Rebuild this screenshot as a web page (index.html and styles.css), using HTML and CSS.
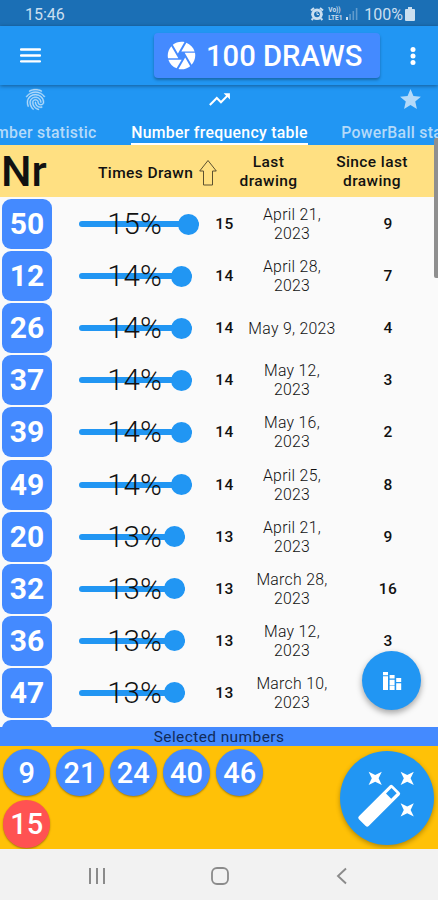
FILE: index.html
```html
<!DOCTYPE html>
<html lang="en">
  <head>
    <meta charset="UTF-8" />
    <meta name="viewport" content="width=device-width, initial-scale=1.0" />
    <title>Number frequency table</title>
    <link rel="stylesheet" href="styles.css">
  </head>
  <body>
    <div class="phone">
      <div class="status-bar">
        <span class="clock">15:46</span>
        <div class="status-icons">
          <svg width="14" height="14" viewBox="0 0 14 14">
            <circle cx="7" cy="7.3" r="5.8" fill="currentColor" />
            <path d="M1 3.5L4 1M13 3.5L10 1M3 11.5L1.6 13M11 11.5L12.4 13" stroke="currentColor" stroke-width="2" />
            <circle cx="7" cy="7.3" r="2.9" fill="#1b6fb5" />
            <path d="M7 5v2.5h2" fill="none" stroke="currentColor" stroke-width="1" />
          </svg>
          <div class="volte"><span>Vo))</span><span>LTE1</span></div>
          <svg class="signal" width="13" height="12" viewBox="0 0 13 12">
            <path d="M1 9h2v3H1z" fill="currentColor" />
            <path d="M4.3 6h1.6v6H4.3zM7.5 3h1.6v9H7.5zM10.8 0h1.6v12h-1.6z" fill="currentColor" opacity=".4" />
          </svg>
          <span class="battery-text">100%</span>
          <svg width="10" height="14" viewBox="0 0 10 14">
            <path d="M3 0h4v2h2q1 0 1 1v10q0 1-1 1H1q-1 0-1-1V3q0-1 1-1h2z" fill="currentColor" />
          </svg>
        </div>
      </div>

      <header class="app-bar">
        <svg class="menu-icon" width="21" height="15" viewBox="0 0 21 15">
          <path d="M1 1.5h19M1 7.5h19M1 13.4h19" stroke="#fff" stroke-width="2.3" stroke-linecap="round" />
        </svg>
        <button class="draws-btn">
          <svg width="33" height="33" viewBox="0 0 24 24" fill="#fff">
            <path d="M9.4 10.5l4.77-8.26C13.47 2.09 12.75 2 12 2c-2.4 0-4.6.85-6.32 2.25l3.66 6.35.06-.1zM21.54 9c-.92-2.92-3.15-5.26-6-6.34L11.88 9h9.66zm.26 1h-7.49l.29.5 4.76 8.25C21 16.97 22 14.61 22 12c0-.69-.07-1.35-.2-2zM8.54 12l-3.9-6.75C3.01 7.03 2 9.39 2 12c0 .69.07 1.35.2 2h7.49l-1.15-2zm-6.08 3c.92 2.92 3.15 5.26 6 6.34L12.12 15H2.46zm11.27 0l-3.9 6.76c.7.15 1.42.24 2.17.24 2.4 0 4.6-.85 6.32-2.25l-3.66-6.35-.93 1.6z" />
          </svg>
          <span>100 DRAWS</span>
        </button>
        <svg class="more-icon" width="6" height="20" viewBox="0 0 6 20" fill="#fff">
          <circle cx="3" cy="3.4" r="2.5" /><circle cx="3" cy="10" r="2.5" /><circle cx="3" cy="16.6" r="2.5" />
        </svg>
      </header>

      <nav class="tabs">
        <div class="tab tab-left">
          <svg width="25" height="25" viewBox="0 0 24 24" fill="currentColor" stroke="currentColor" stroke-width=".4">
            <path d="M17.81 4.47c-.08 0-.16-.02-.23-.06C15.66 3.42 14 3 12.01 3c-1.98 0-3.86.47-5.57 1.41-.24.13-.54.04-.68-.2-.13-.24-.04-.55.2-.68C7.82 2.52 9.86 2 12.01 2c2.13 0 3.99.47 6.03 1.52.25.13.34.43.21.67-.09.18-.26.28-.44.28zM3.5 9.72c-.1 0-.2-.03-.29-.09-.23-.16-.28-.47-.12-.7.99-1.4 2.25-2.5 3.75-3.27C9.98 4.04 14 4.03 17.15 5.65c1.5.77 2.76 1.86 3.75 3.25.16.22.11.54-.12.7-.23.16-.54.11-.7-.12-.9-1.26-2.04-2.25-3.39-2.94-2.87-1.47-6.54-1.47-9.4.01-1.36.7-2.5 1.7-3.4 2.96-.08.14-.23.21-.39.21zm6.25 12.07c-.13 0-.26-.05-.35-.15-.87-.87-1.34-1.43-2.01-2.64-.69-1.23-1.05-2.73-1.05-4.34 0-2.97 2.54-5.39 5.66-5.39s5.66 2.42 5.66 5.39c0 .28-.22.5-.5.5s-.5-.22-.5-.5c0-2.42-2.09-4.39-4.66-4.39-2.57 0-4.66 1.97-4.66 4.39 0 1.44.32 2.77.93 3.85.64 1.15 1.08 1.64 1.85 2.42.19.2.19.51 0 .71-.11.1-.24.15-.37.15zm7.17-1.85c-1.19 0-2.24-.3-3.1-.89-1.49-1.01-2.38-2.65-2.38-4.39 0-.28.22-.5.5-.5s.5.22.5.5c0 1.41.72 2.74 1.94 3.56.71.48 1.54.71 2.54.71.24 0 .64-.03 1.04-.1.27-.05.53.13.58.41.05.27-.13.53-.41.58-.57.11-1.07.12-1.21.12zM14.91 22c-.04 0-.09-.01-.13-.02-1.59-.44-2.63-1.03-3.72-2.1-1.4-1.39-2.17-3.24-2.17-5.22 0-1.62 1.38-2.94 3.08-2.94 1.7 0 3.08 1.32 3.08 2.94 0 1.07.93 1.94 2.08 1.94s2.08-.87 2.08-1.94c0-3.77-3.25-6.83-7.25-6.83-2.84 0-5.44 1.58-6.61 4.03-.39.81-.59 1.76-.59 2.8 0 .78.07 2.01.67 3.61.1.26-.03.55-.29.64-.26.1-.55-.04-.64-.29-.49-1.31-.73-2.61-.73-3.96 0-1.2.23-2.29.68-3.24 1.33-2.79 4.28-4.6 7.51-4.6 4.55 0 8.25 3.51 8.25 7.83 0 1.62-1.38 2.94-3.08 2.94s-3.08-1.32-3.08-2.94c0-1.07-.93-1.94-2.08-1.94s-2.08.87-2.08 1.94c0 1.71.66 3.31 1.87 4.51.95.94 1.86 1.46 3.27 1.85.27.07.42.35.35.61-.05.23-.26.38-.47.38z" />
          </svg>
          <span class="tab-label">Number statistic</span>
        </div>
        <div class="tab tab-center active">
          <svg width="25" height="25" viewBox="0 0 24 24" fill="currentColor">
            <path d="M16 6l2.29 2.29-4.88 4.88-4-4L2 16.59 3.41 18l6-6 4 4 6.3-6.29L22 12V6z" />
          </svg>
          <span class="tab-label">Number frequency table</span>
        </div>
        <div class="tab tab-right">
          <svg width="25" height="25" viewBox="0 0 24 24" fill="currentColor">
            <path d="M12 17.27L18.18 21l-1.64-7.03L22 9.24l-7.19-.61L12 2 9.19 8.63 2 9.24l5.46 4.73L5.82 21z" />
          </svg>
          <span class="tab-label">PowerBall statistic</span>
        </div>
      </nav>

      <div class="table-head">
        <span class="head-nr">Nr</span>
        <div class="head-times">
          <span>Times Drawn</span>
          <svg width="20" height="28" viewBox="0 0 20 28">
            <path d="M10 1.5L18.3 12H14.5V26H5.5V12H1.7z" fill="none" stroke="#5c5130" stroke-width="1" />
          </svg>
        </div>
        <span class="head-text">Last<br>drawing</span>
        <span class="head-text">Since last<br>drawing</span>
      </div>

      <div class="list" id="list">
        <!-- Rows are added by script.js -->
      </div>

      <div class="selected-title">Selected numbers</div>
      <div class="selected">
        <div class="balls">
          <span class="ball">9</span>
          <span class="ball">21</span>
          <span class="ball">24</span>
          <span class="ball">40</span>
          <span class="ball">46</span>
          <span class="ball ball-red">15</span>
        </div>
        <button class="magic-btn">
          <svg width="94" height="94" viewBox="0 0 94 94" fill="#fff">
            <path id="spark" d="M28.6 20.7l6.6 3.2 6.6-3.2-3.2 6.6 3.2 6.6-6.6-3.2-6.6 3.2 3.2-6.6z" />
            <use href="#spark" x="32" />
            <use href="#spark" x="32" y="31.6" />
            <path fill-rule="evenodd" d="M49.7 34.4q1.5-1.5 3 0l6.8 6.8q1.5 1.5 0 3L28.7 75q-1.5 1.5-3 0l-6.8-6.8q-1.5-1.5 0-3zM51.5 37L46 42.5l5.2 5.2 5.5-5.5z" />
          </svg>
        </button>
      </div>

      <div class="nav-bar">
        <svg width="18" height="18" viewBox="0 0 18 18">
          <path d="M2 1v16M9 1v16M16 1v16" stroke="#8b8b8b" stroke-width="2" />
        </svg>
        <svg width="18" height="18" viewBox="0 0 18 18">
          <rect x="1" y="1" width="16" height="16" rx="5" fill="none" stroke="#8b8b8b" stroke-width="1.8" />
        </svg>
        <svg width="18" height="18" viewBox="0 0 18 18">
          <path d="M13 1.5L5 9l8 7.5" fill="none" stroke="#8b8b8b" stroke-width="1.9" />
        </svg>
      </div>

      <div class="scrollbar"></div>
      <button class="chart-btn">
        <svg width="20" height="20" viewBox="0 0 20 20" fill="#fff">
          <path d="M1 1h5v3.2H1zM1 5.3h5V19H1zM7.6 4h5v3.6h-5zM7.6 8.8h5V14h-5zM7.6 14.6h5V19h-5zM14.2 7h5v4h-5zM14.2 12.2h5V19h-5z" />
        </svg>
      </button>
    </div>
    <script src="script.js"></script>
  </body>
</html>
```

FILE: styles.css
```css
body {
  margin: 0;
  font-family: Roboto, sans-serif;
  color: #111;
}

button {
  border: none;
  padding: 0;
  font-family: inherit;
  color: #fff;
}

svg {
  flex-shrink: 0;
}

.phone {
  position: relative;
  width: 438px;
  height: 900px;
  display: flex;
  flex-direction: column;
  overflow: hidden;
  background-color: #fafafa;
}

/* Status bar */
.status-bar {
  height: 26px;
  flex-shrink: 0;
  display: flex;
  align-items: center;
  justify-content: space-between;
  padding: 2px 23px 0 25px;
  box-sizing: border-box;
  background-color: #1b6fb5;
  color: #cbdff0;
  font-size: 16px;
}

.status-icons {
  display: flex;
  align-items: center;
}

.volte {
  display: flex;
  flex-direction: column;
  width: 17px;
  margin-left: 4px;
  font-size: 6.5px;
  line-height: 8px;
  font-weight: 700;
}

.signal {
  margin-right: 6px;
}

.battery-text {
  margin-right: 2px;
}

/* App bar */
.app-bar {
  height: 59px;
  flex-shrink: 0;
  display: flex;
  align-items: center;
  padding: 0 22px 0 20px;
  background-color: #2196f3;
  box-shadow: 0 1px 4px rgba(0, 0, 0, 0.4);
  z-index: 1;
}

.draws-btn {
  display: flex;
  align-items: center;
  gap: 8px;
  width: 226px;
  height: 45px;
  margin: 0 auto 0 113px;
  padding-left: 11px;
  border-radius: 4px;
  background-color: #448aff;
  box-shadow: 0 2px 3px rgba(0, 0, 0, 0.3);
  font-size: 29.2px;
  font-weight: 500;
  white-space: nowrap;
}

/* Tabs */
.tabs {
  height: 60px;
  flex-shrink: 0;
  display: flex;
  margin-left: -43px;
  background-color: #2196f3;
  box-shadow: 0 2px 4px rgba(0, 0, 0, 0.35);
}

.tab {
  flex-shrink: 0;
  display: flex;
  flex-direction: column;
  align-items: center;
  padding-top: 2px;
  box-sizing: border-box;
  color: #b4daf9;
  font-size: 15.8px;
  font-weight: 500;
  letter-spacing: 0.3px;
}

.tab-left {
  width: 157px;
}

.tab-center {
  width: 211px;
}

.tab-right {
  width: 170px;
}

.tab-label {
  height: 22px;
  margin-top: 9px;
  line-height: 24px;
  white-space: nowrap;
}

.tab.active {
  color: #fff;
}

.tab.active .tab-label {
  border-bottom: 2px solid #fff;
}

/* Table */
.table-head {
  height: 52px;
  flex-shrink: 0;
  display: grid;
  grid-template-columns: 98px 119px 103px 104px;
  align-items: center;
  background-color: #ffe082;
  font-size: 15.5px;
  font-weight: 500;
  letter-spacing: 0.4px;
}

.head-nr {
  padding-left: 1px;
  font-size: 43px;
  font-weight: 500;
  letter-spacing: 0;
}

.head-times {
  display: flex;
  align-items: center;
  justify-content: space-between;
  padding: 3px 0 0;
  margin-right: -1px;
  white-space: nowrap;
}

.head-text {
  text-align: center;
  line-height: 19px;
  padding-top: 1px;
}

.list {
  height: 530px;
  flex-shrink: 0;
  overflow: hidden;
  padding-top: 1px;
  box-sizing: border-box;
}

.row {
  height: 52.1px;
  display: grid;
  grid-template-columns: 79px 127px 37px 98px 94px;
  align-items: center;
}

.number {
  width: 50px;
  height: 50px;
  margin-left: 2px;
  border-radius: 9px;
  background-color: #448aff;
  color: #fff;
  font-size: 30px;
  font-weight: 700;
  line-height: 50px;
  text-align: center;
}

.slider {
  display: grid;
  align-items: center;
}

.slider > * {
  grid-area: 1 / 1;
}

.bar {
  display: flex;
  align-items: center;
  justify-content: flex-end;
  height: 6px;
  border-radius: 3px;
  background-color: #2196f3;
}

.thumb {
  flex-shrink: 0;
  width: 21px;
  height: 21px;
  border-radius: 50%;
  background-color: #2196f3;
}

.percent {
  width: 111px;
  text-align: center;
  font-size: 29.5px;
  font-weight: 300;
}

.count,
.since {
  text-align: center;
  font-size: 15.5px;
  font-weight: 500;
  letter-spacing: 0.4px;
}

.date {
  text-align: center;
  font-size: 15.8px;
  font-weight: 300;
  line-height: 19px;
  letter-spacing: 0.3px;
}

/* Selected numbers */
.selected-title {
  height: 19px;
  flex-shrink: 0;
  background-color: #448aff;
  text-align: center;
  font-size: 15.5px;
  line-height: 20px;
  letter-spacing: 0.4px;
  color: #112c5c;
}

.selected {
  height: 103px;
  flex-shrink: 0;
  display: flex;
  justify-content: space-between;
  padding: 0 4px 0 3px;
  background-color: #ffc107;
}

.balls {
  display: flex;
  flex-wrap: wrap;
  align-content: flex-start;
  gap: 4px 6px;
  width: 270px;
  padding-top: 3px;
}

.ball {
  width: 47.3px;
  height: 47.3px;
  border-radius: 50%;
  background-color: #448aff;
  box-shadow: 0 1px 2px rgba(0, 0, 0, 0.35);
  color: #fff;
  font-size: 29px;
  font-weight: 500;
  line-height: 48px;
  text-align: center;
}

.ball-red {
  background-color: #ff5252;
}

.magic-btn {
  width: 94px;
  height: 94px;
  margin-top: 5px;
  border-radius: 50%;
  background-color: #2196f3;
  box-shadow: 0 2px 5px rgba(0, 0, 0, 0.3);
}

.nav-bar {
  height: 51px;
  display: flex;
  align-items: center;
  justify-content: space-between;
  padding: 2px 87px 0 88px;
  background-color: #f2f2f2;
}

/* Floating over the list */
.scrollbar {
  position: absolute;
  top: 138px;
  right: 0;
  width: 4px;
  height: 140px;
  border-radius: 2px 0 0 2px;
  background-color: #8f8f8f;
  z-index: 2;
}

.chart-btn {
  position: absolute;
  top: 651px;
  left: 362px;
  display: flex;
  align-items: center;
  justify-content: center;
  width: 59px;
  height: 59px;
  border-radius: 50%;
  background-color: #2196f3;
  box-shadow: 0 3px 6px rgba(0, 0, 0, 0.35);
}
```

FILE: script.js
```js
const rows = [
  { nr: 50, count: 15, date: "April 21, 2023", since: 9 },
  { nr: 12, count: 14, date: "April 28, 2023", since: 7 },
  { nr: 26, count: 14, date: "May 9, 2023", since: 4 },
  { nr: 37, count: 14, date: "May 12, 2023", since: 3 },
  { nr: 39, count: 14, date: "May 16, 2023", since: 2 },
  { nr: 49, count: 14, date: "April 25, 2023", since: 8 },
  { nr: 20, count: 13, date: "April 21, 2023", since: 9 },
  { nr: 32, count: 13, date: "March 28, 2023", since: 16 },
  { nr: 36, count: 13, date: "May 12, 2023", since: 3 },
  { nr: 47, count: 13, date: "March 10, 2023", since: "" },
];

const list = document.getElementById("list");

rows.forEach((item) => {
  const row = document.createElement("div");
  row.className = "row";
  // Only short dates fit on one line
  const date = item.date.length > 11 ? item.date.replace(", ", ",<br>") : item.date;
  row.innerHTML = `
    <span class="number">${item.nr}</span>
    <div class="slider">
      <div class="bar" style="width: ${15 + item.count * 7}px"><span class="thumb"></span></div>
      <span class="percent">${item.count}%</span>
    </div>
    <span class="count">${item.count}</span>
    <span class="date">${date}</span>
    <span class="since">${item.since}</span>
  `;
  list.appendChild(row);
});

// Next row, cut off by the bottom panel
const next = document.createElement("div");
next.className = "row";
next.innerHTML = `<span class="number"></span>`;
list.appendChild(next);
```
